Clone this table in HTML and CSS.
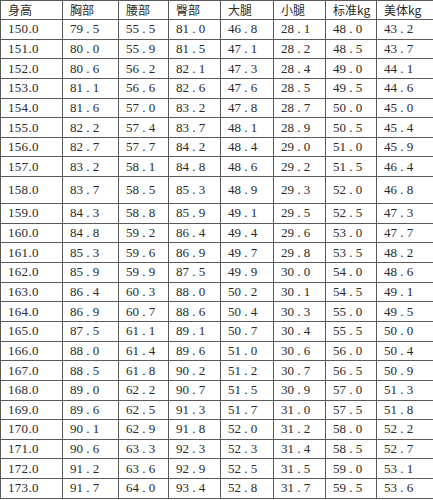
FILE: index.html
```html
<!DOCTYPE html>
<html lang="zh-CN">
<head>
<meta charset="utf-8">
<title>身高体重对照表</title>
<link rel="stylesheet" href="styles.css">
</head>
<body>
<table class="size-table">
  <colgroup>
    <col class="c1"><col class="c2"><col class="c3"><col class="c4"><col class="c5"><col class="c6"><col class="c7"><col class="c8">
  </colgroup>
  <thead>
    <tr class="head-row"><th>身高</th><th>胸部</th><th>腰部</th><th>臀部</th><th>大腿</th><th>小腿</th><th>标准kg</th><th>美体kg</th></tr>
  </thead>
  <tbody>
    <tr><td class="h">150.0</td><td>79 . 5</td><td>55 . 5</td><td>81 . 0</td><td>46 . 8</td><td>28 . 1</td><td>48 . 0</td><td>43 . 2</td></tr>
    <tr><td class="h">151.0</td><td>80 . 0</td><td>55 . 9</td><td>81 . 5</td><td>47 . 1</td><td>28 . 2</td><td>48 . 5</td><td>43 . 7</td></tr>
    <tr><td class="h">152.0</td><td>80 . 6</td><td>56 . 2</td><td>82 . 1</td><td>47 . 3</td><td>28 . 4</td><td>49 . 0</td><td>44 . 1</td></tr>
    <tr><td class="h">153.0</td><td>81 . 1</td><td>56 . 6</td><td>82 . 6</td><td>47 . 6</td><td>28 . 5</td><td>49 . 5</td><td>44 . 6</td></tr>
    <tr><td class="h">154.0</td><td>81 . 6</td><td>57 . 0</td><td>83 . 2</td><td>47 . 8</td><td>28 . 7</td><td>50 . 0</td><td>45 . 0</td></tr>
    <tr><td class="h">155.0</td><td>82 . 2</td><td>57 . 4</td><td>83 . 7</td><td>48 . 1</td><td>28 . 9</td><td>50 . 5</td><td>45 . 4</td></tr>
    <tr><td class="h">156.0</td><td>82 . 7</td><td>57 . 7</td><td>84 . 2</td><td>48 . 4</td><td>29 . 0</td><td>51 . 0</td><td>45 . 9</td></tr>
    <tr><td class="h">157.0</td><td>83 . 2</td><td>58 . 1</td><td>84 . 8</td><td>48 . 6</td><td>29 . 2</td><td>51 . 5</td><td>46 . 4</td></tr>
    <tr class="tall"><td class="h">158.0</td><td>83 . 7</td><td>58 . 5</td><td>85 . 3</td><td>48 . 9</td><td>29 . 3</td><td>52 . 0</td><td>46 . 8</td></tr>
    <tr><td class="h">159.0</td><td>84 . 3</td><td>58 . 8</td><td>85 . 9</td><td>49 . 1</td><td>29 . 5</td><td>52 . 5</td><td>47 . 3</td></tr>
    <tr><td class="h">160.0</td><td>84 . 8</td><td>59 . 2</td><td>86 . 4</td><td>49 . 4</td><td>29 . 6</td><td>53 . 0</td><td>47 . 7</td></tr>
    <tr><td class="h">161.0</td><td>85 . 3</td><td>59 . 6</td><td>86 . 9</td><td>49 . 7</td><td>29 . 8</td><td>53 . 5</td><td>48 . 2</td></tr>
    <tr><td class="h">162.0</td><td>85 . 9</td><td>59 . 9</td><td>87 . 5</td><td>49 . 9</td><td>30 . 0</td><td>54 . 0</td><td>48 . 6</td></tr>
    <tr><td class="h">163.0</td><td>86 . 4</td><td>60 . 3</td><td>88 . 0</td><td>50 . 2</td><td>30 . 1</td><td>54 . 5</td><td>49 . 1</td></tr>
    <tr><td class="h">164.0</td><td>86 . 9</td><td>60 . 7</td><td>88 . 6</td><td>50 . 4</td><td>30 . 3</td><td>55 . 0</td><td>49 . 5</td></tr>
    <tr><td class="h">165.0</td><td>87 . 5</td><td>61 . 1</td><td>89 . 1</td><td>50 . 7</td><td>30 . 4</td><td>55 . 5</td><td>50 . 0</td></tr>
    <tr><td class="h">166.0</td><td>88 . 0</td><td>61 . 4</td><td>89 . 6</td><td>51 . 0</td><td>30 . 6</td><td>56 . 0</td><td>50 . 4</td></tr>
    <tr><td class="h">167.0</td><td>88 . 5</td><td>61 . 8</td><td>90 . 2</td><td>51 . 2</td><td>30 . 7</td><td>56 . 5</td><td>50 . 9</td></tr>
    <tr><td class="h">168.0</td><td>89 . 0</td><td>62 . 2</td><td>90 . 7</td><td>51 . 5</td><td>30 . 9</td><td>57 . 0</td><td>51 . 3</td></tr>
    <tr><td class="h">169.0</td><td>89 . 6</td><td>62 . 5</td><td>91 . 3</td><td>51 . 7</td><td>31 . 0</td><td>57 . 5</td><td>51 . 8</td></tr>
    <tr><td class="h">170.0</td><td>90 . 1</td><td>62 . 9</td><td>91 . 8</td><td>52 . 0</td><td>31 . 2</td><td>58 . 0</td><td>52 . 2</td></tr>
    <tr><td class="h">171.0</td><td>90 . 6</td><td>63 . 3</td><td>92 . 3</td><td>52 . 3</td><td>31 . 4</td><td>58 . 5</td><td>52 . 7</td></tr>
    <tr><td class="h">172.0</td><td>91 . 2</td><td>63 . 6</td><td>92 . 9</td><td>52 . 5</td><td>31 . 5</td><td>59 . 0</td><td>53 . 1</td></tr>
    <tr><td class="h">173.0</td><td>91 . 7</td><td>64 . 0</td><td>93 . 4</td><td>52 . 8</td><td>31 . 7</td><td>59 . 5</td><td>53 . 6</td></tr>
  </tbody>
</table>
</body>
</html>
```
FILE: styles.css
```css
html, body {
  margin: 0;
  padding: 0;
  background: #ffffff;
}

.size-table {
  border-collapse: collapse;
  table-layout: fixed;
  width: 434px;
  color: #2a2a2a;
  font-family: "Liberation Serif", "Noto Sans CJK SC", serif;
  font-size: 13px;
}

.c1 { width: 62px; }
.c2 { width: 56px; }
.c3 { width: 50px; }
.c4 { width: 52px; }
.c5 { width: 53px; }
.c6 { width: 52px; }
.c7 { width: 51px; }
.c8 { width: 58px; }

.size-table th,
.size-table td {
  border: 1px solid #5a5a5a;
  padding: 0 0 0 7px;
  text-align: left;
  vertical-align: middle;
  white-space: pre;
  overflow: hidden;
  line-height: 14px;
}

.size-table th {
  font-family: "Noto Sans CJK SC", "Noto Sans", sans-serif;
  font-weight: normal;
  font-size: 12px;
}

.head-row { height: 19px; }
.size-table tbody tr { height: 19.65px; }
.size-table tbody tr.tall { height: 27px; }

.size-table td.h {
  letter-spacing: 0.3px;
}
```
